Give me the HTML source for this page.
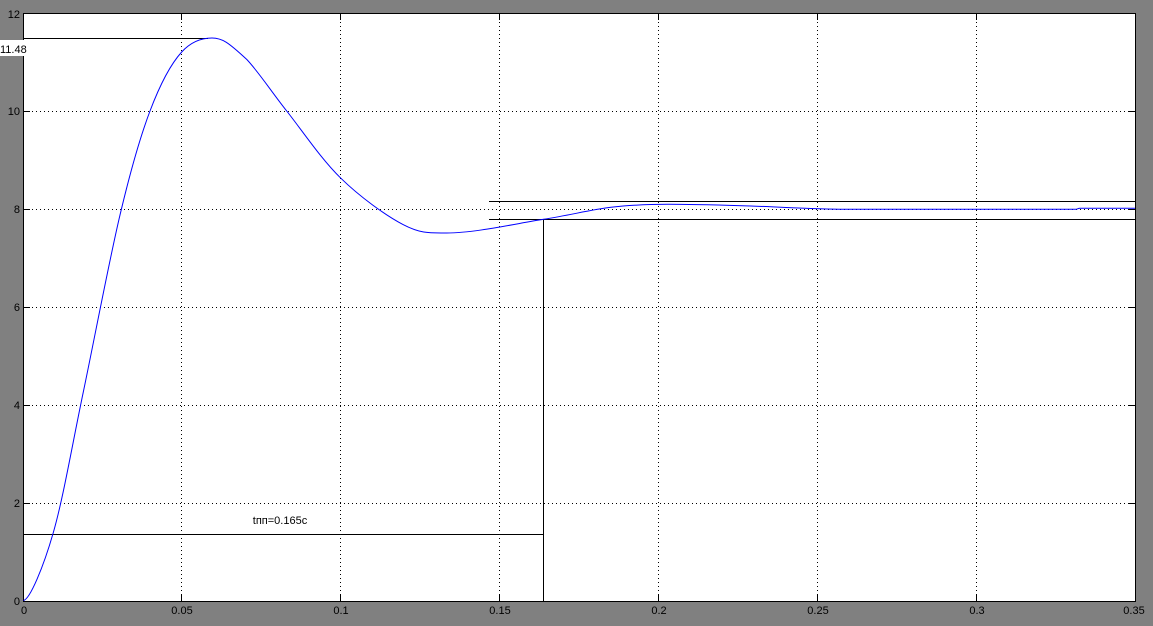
<!DOCTYPE html>
<html><head><meta charset="utf-8"><style>
html,body{margin:0;padding:0;background:#808080;}
svg{display:block;font-family:"Liberation Sans",sans-serif;font-size:11px;}
</style></head><body>
<svg width="1153" height="626" viewBox="0 0 1153 626" xmlns="http://www.w3.org/2000/svg">
<rect x="0" y="0" width="1153" height="626" fill="#808080"/>
<rect x="23.5" y="13.5" width="1112" height="588" fill="#fff" stroke="#000" stroke-width="1"/>
<g stroke="#000" stroke-width="1" stroke-dasharray="1,3" fill="none">
<line x1="181.5" y1="14" x2="181.5" y2="601"/>
<line x1="340.5" y1="14" x2="340.5" y2="601"/>
<line x1="499.5" y1="14" x2="499.5" y2="601"/>
<line x1="658.5" y1="14" x2="658.5" y2="601"/>
<line x1="817.5" y1="14" x2="817.5" y2="601"/>
<line x1="976.5" y1="14" x2="976.5" y2="601"/>
<line x1="24" y1="111.5" x2="1135" y2="111.5"/>
<line x1="24" y1="209.5" x2="1135" y2="209.5"/>
<line x1="24" y1="307.5" x2="1135" y2="307.5"/>
<line x1="24" y1="405.5" x2="1135" y2="405.5"/>
<line x1="24" y1="503.5" x2="1135" y2="503.5"/>
</g>
<g stroke="#000" stroke-width="1">
<path d="M181.5 601v-6M340.5 601v-6M499.5 601v-6M658.5 601v-6M817.5 601v-6M976.5 601v-6
M181.5 14v6M340.5 14v6M499.5 14v6M658.5 14v6M817.5 14v6M976.5 14v6
M24 111.5h6M24 209.5h6M24 307.5h6M24 405.5h6M24 503.5h6
M1135 111.5h-6M1135 209.5h-6M1135 307.5h-6M1135 405.5h-6M1135 503.5h-6"/>
<line x1="23" y1="38.5" x2="208" y2="38.5"/>
<line x1="489" y1="201.5" x2="1136" y2="201.5"/>
<line x1="489" y1="219.5" x2="1136" y2="219.5"/>
<line x1="543.5" y1="219" x2="543.5" y2="601"/>
<line x1="23" y1="534.5" x2="543" y2="534.5"/>
</g>
<path fill="none" stroke="#0000ff" stroke-width="1" d="M23.5 600.5
C30 599 43.3 567.4 53.3 532.6
C63.3 497.9 72.2 444.9 83.3 392
C94.4 339.1 108.9 261.8 120 215
C131.1 168.2 139.7 138.2 150 111
C160.3 83.8 170.6 64.2 181.7 52
C192.8 39.8 204 38 212 38
C222 38 228 42 246.7 59.4
C258.4 71.6 271.1 91.3 286.7 111
C302.3 130.7 320.9 158.7 340.3 177.7
C359.7 196.7 385.6 215.5 403.3 224.7
C421 233.9 430 233 446.7 233
C475 233 516.1 223.6 543.5 219.3
C570.9 215 590.3 209.8 611 207.3
C631.8 204.8 650 204.3 668 204.3
C690 204.3 712.7 204.9 742 205.7
C771.3 206.5 815 209.3 844 209.3
L1076 209.3 C1078 209 1078 208.3 1080 208.2 L1135 208.3"/>
<rect x="0" y="40" width="32" height="16" fill="#fff"/>
<text x="0" y="53" fill="#000">11.48</text>
<text x="280" y="524" fill="#000" text-anchor="middle">tпп=0.165c</text>
<g fill="#000" text-anchor="end">
<text x="20" y="18">12</text>
<text x="20" y="115">10</text>
<text x="20" y="213">8</text>
<text x="20" y="311">6</text>
<text x="20" y="409">4</text>
<text x="20" y="507">2</text>
<text x="20" y="605">0</text>
</g>
<g fill="#000" text-anchor="middle">
<text x="24" y="614">0</text>
<text x="182" y="614">0.05</text>
<text x="341" y="614">0.1</text>
<text x="500" y="614">0.15</text>
<text x="659" y="614">0.2</text>
<text x="818" y="614">0.25</text>
<text x="977" y="614">0.3</text>
<text x="1134" y="614">0.35</text>
</g>
</svg>
</body></html>
